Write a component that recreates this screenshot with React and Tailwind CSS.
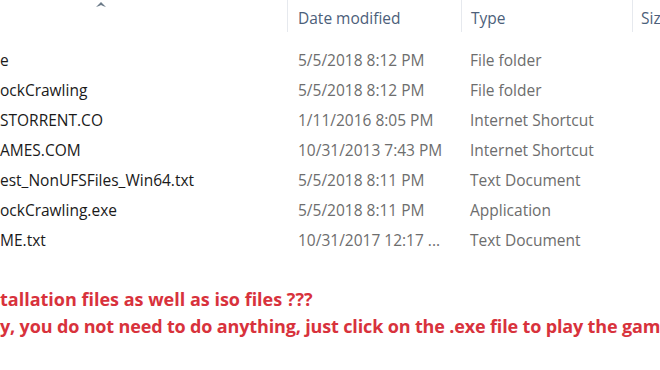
import React from 'react';

const rows = [
  { name: 'e', date: '5/5/2018 8:12 PM', type: 'File folder' },
  { name: 'ockCrawling', date: '5/5/2018 8:12 PM', type: 'File folder' },
  { name: 'STORRENT.CO', date: '1/11/2016 8:05 PM', type: 'Internet Shortcut' },
  { name: 'AMES.COM', date: '10/31/2013 7:43 PM', type: 'Internet Shortcut' },
  { name: 'est_NonUFSFiles_Win64.txt', date: '5/5/2018 8:11 PM', type: 'Text Document' },
  { name: 'ockCrawling.exe', date: '5/5/2018 8:11 PM', type: 'Application' },
  { name: 'ME.txt', date: '10/31/2017 12:17 ...', type: 'Text Document' },
];

const font = { fontFamily: '"Open Sans", "Noto Sans", sans-serif' };

export default function App() {
  return (
    <div className="w-[660px] h-[370px] bg-white overflow-hidden relative" style={font}>
      {/* header */}
      <div className="flex h-[36px] text-[15.5px] text-[#4c607a]">
        <div className="w-[287px] shrink-0 relative">
          <svg width="10" height="6" viewBox="0 0 10 6" className="absolute left-[96px] top-[1px]">
            <path d="M0 6 L5 1 L10 6 L7 5 L5 4 L3 5 Z" fill="#6b7a88" />
          </svg>
        </div>
        <div className="w-[174px] shrink-0 border-l border-[#e6e9ee] pl-[10px] pt-[7px] h-[32px]">Date modified</div>
        <div className="w-[171px] shrink-0 border-l border-[#e6e9ee] pl-[9px] pt-[7px] h-[32px]">Type</div>
        <div className="flex-1 min-w-0 border-l border-[#e6e9ee] pl-[8px] pt-[7px] h-[32px] whitespace-nowrap">Size</div>
      </div>

      {/* rows */}
      <div className="flex flex-col pt-[10px] text-[15.5px]">
        {rows.map((r) => (
          <div key={r.name} className="flex h-[30px] items-center whitespace-nowrap">
            <div className="w-[288px] shrink-0 text-[#1a1a1a]">{r.name}</div>
            <div className="w-[172px] shrink-0 pl-[10px] text-[#6d6d6d]">{r.date}</div>
            <div className="flex-1 min-w-0 pl-[10px] text-[#6d6d6d]">{r.type}</div>
          </div>
        ))}
      </div>

      {/* red note */}
      <div className="mt-[30px] text-[18px] font-bold text-[#d8323c] leading-[27px] whitespace-nowrap">
        <div>tallation files as well as iso files ???</div>
        <div className="tracking-[-0.15px]">y, you do not need to do anything, just click on the .exe file to play the game</div>
      </div>
    </div>
  );
}
